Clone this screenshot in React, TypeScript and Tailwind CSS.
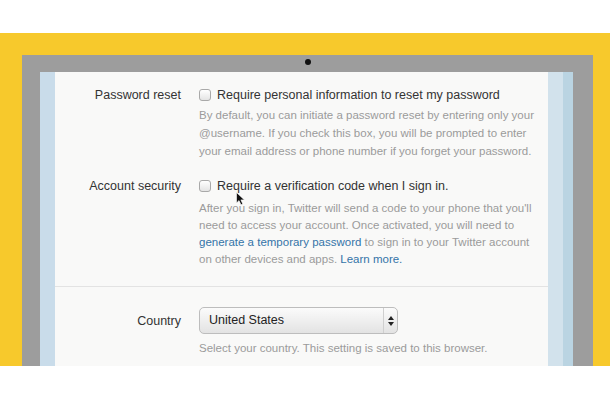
import React from 'react'

// Twitter 설정 화면을 노트북 화면 안에 찍은 캡처.
const font = "font-['Liberation_Sans','Helvetica_Neue',Arial,sans-serif]"

function Checkbox() {
  return (
    <span className="inline-block h-[12px] w-[12px] shrink-0 rounded-[3px] border border-[#a9a9a9] bg-gradient-to-b from-white to-[#e4e4e4]" />
  )
}

function Row({ label, children }: { label: string; children: React.ReactNode }) {
  return (
    <div className="flex">
      <div className="w-[126px] shrink-0 text-right text-[12.5px] leading-[18px] text-[#333]">{label}</div>
      <div className="ml-[18px] flex-1">{children}</div>
    </div>
  )
}

export default function App() {
  return (
    <div className={`relative flex h-[400px] w-[610px] flex-col overflow-hidden bg-white ${font}`}>
      <div className="h-[33px] bg-white" />
      <div className="h-[333px] overflow-hidden bg-[#f7c92c] pl-[22px] pr-[17px] pt-[22px]">
        <div className="relative flex h-full bg-[#9d9d9d] pl-[18px] pr-[20px] pt-[17px]">
          {/* 카메라 */}
          <span className="absolute left-1/2 top-[4px] h-[6px] w-[6px] -translate-x-1/2 rounded-full bg-[#111]" />
          <div className="w-[15px] bg-[#c9dcea]" />
          <div className="flex-1 whitespace-nowrap bg-[#f9f9f8] pt-[14px]">
            <Row label="Password reset">
              <div className="flex h-[18px] items-center gap-[6px] text-[12.5px] text-[#333]">
                <Checkbox />
                <span>Require personal information to reset my password</span>
              </div>
              <p className="mt-[2px] text-[11.5px] leading-[18px] text-[#9b9b9b]">
                By default, you can initiate a password reset by entering only your
                <br />
                @username. If you check this box, you will be prompted to enter
                <br />
                your email address or phone number if you forget your password.
              </p>
            </Row>
            <div className="mt-[17px]">
              <Row label="Account security">
                <div className="flex h-[18px] items-center gap-[6px] text-[12.5px] text-[#333]">
                  <Checkbox />
                  <span>Require a verification code when I sign in.</span>
                </div>
                <p className="mt-[5px] text-[11.5px] leading-[17px] text-[#9b9b9b]">
                  After you sign in, Twitter will send a code to your phone that you'll
                  <br />
                  need to access your account. Once activated, you will need to
                  <br />
                  <span className="text-[#3474a8]">generate a temporary password</span> to sign in to your Twitter account
                  <br />
                  on other devices and apps. <span className="text-[#3474a8]">Learn more.</span>
                </p>
              </Row>
            </div>
            <div className="mt-[18px] h-px bg-[#e3e3e3]" />
            <div className="mt-[20px] flex items-center">
              <div className="w-[126px] shrink-0 text-right text-[12.5px] leading-[18px] text-[#333]">Country</div>
              <div className="ml-[18px] flex h-[27px] w-[199px] items-stretch rounded-[5px] border border-[#bdbdbd] bg-gradient-to-b from-[#fbfbfb] to-[#e3e3e3] text-[12.5px] text-[#222]">
                <span className="flex flex-1 items-center pl-[9px]">United States</span>
                <span className="flex w-[14px] flex-col items-center justify-center gap-[1px] border-l border-[#cfcfcf]">
                  <svg width="6" height="10" viewBox="0 0 6 10">
                    <path d="M3 0 L6 4 L0 4 Z M0 6 L6 6 L3 10 Z" fill="#222" />
                  </svg>
                </span>
              </div>
            </div>
            <p className="ml-[144px] mt-[6px] text-[11.5px] leading-[17px] text-[#9b9b9b]">
              Select your country. This setting is saved to this browser.
            </p>
          </div>
          <div className="w-[15px] bg-[#d2e2ec]" />
          <div className="w-[10px] bg-[#bad4e2]" />
        </div>
      </div>
      <div className="h-[34px] bg-white" />
      {/* 마우스 커서 */}
      <svg className="absolute left-[236px] top-[192px]" width="10" height="14" viewBox="0 0 10 14">
        <path d="M0.5 0.5 L0.5 11 L3 8.6 L5 12.8 L6.8 12 L4.9 7.9 L8.4 7.9 Z" fill="#111" stroke="#fff" strokeWidth="0.6" />
      </svg>
    </div>
  )
}
